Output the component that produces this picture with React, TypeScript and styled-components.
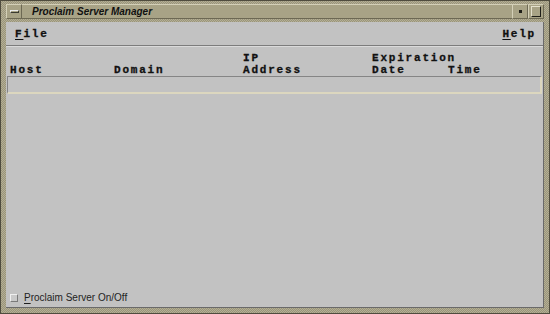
import React from "react";
import styled, { createGlobalStyle } from "styled-components";

const Global = createGlobalStyle`
  html, body { margin: 0; padding: 0; background: #c2c2c2; }
  * { box-sizing: border-box; }
`;

const Window = styled.div`
  width: 550px;
  height: 314px;
  display: flex;
  flex-direction: column;
  padding: 3px 5px 5px 5px;
  border: 1px solid #4f4c3e;
  background-color: #a9a489;
  background-image: repeating-conic-gradient(#99947a 0 25%, #b4af95 0 50%);
  background-size: 2px 2px;
`;

const TitleBar = styled.div`
  height: 15px;
  display: flex;
  align-items: stretch;
  background: #a8a386;
  margin-bottom: 3px;
`;

const TitleButton = styled.div<{ $w: number }>`
  width: ${(p) => p.$w}px;
  flex: none;
  display: flex;
  align-items: center;
  justify-content: center;
  border-top: 1px solid #d4d0b8;
  border-left: 1px solid #d4d0b8;
  border-bottom: 1px solid #6d6954;
  border-right: 1px solid #6d6954;
`;

const MenuGlyph = styled.div`
  width: 9px;
  height: 3px;
  border-top: 1px solid #ececec;
  border-left: 1px solid #ececec;
  border-bottom: 1px solid #3a3a30;
  border-right: 1px solid #3a3a30;
`;

const MinGlyph = styled.div`
  width: 3px;
  height: 3px;
  background: #1e1e18;
  border: 1px solid #1e1e18;
`;

const MaxGlyph = styled.div`
  width: 10px;
  height: 11px;
  border-top: 1px solid #e4e0cc;
  border-left: 1px solid #e4e0cc;
  border-bottom: 1px solid #1e1e18;
  border-right: 1px solid #1e1e18;
`;

const TitleText = styled.div`
  flex: 1;
  display: flex;
  align-items: center;
  padding-left: 10px;
  font-family: "Liberation Sans", Arial, sans-serif;
  font-weight: bold;
  font-style: italic;
  font-size: 10px;
  color: #111;
  border-top: 1px solid #d4d0b8;
  border-bottom: 1px solid #6d6954;
`;

const Client = styled.div`
  flex: 1;
  display: flex;
  flex-direction: column;
  background: #c2c2c2;
  border-right: 1px solid #6a6a6a;
  border-bottom: 1px solid #6a6a6a;
`;

const MenuBar = styled.div`
  height: 24px;
  display: flex;
  align-items: center;
  justify-content: space-between;
  padding: 1px 7px 0 9px;
  border-bottom: 1px solid #7c7c7c;
  box-shadow: 0 1px 0 #dadada;
`;

const MonoText = styled.span`
  font-family: "Liberation Mono", "Courier New", monospace;
  font-weight: bold;
  font-size: 11px;
  letter-spacing: 1.8px;
  color: #111;
  white-space: pre;
  -webkit-text-stroke: 0.3px #111;
`;

const Mnemonic = styled.span`
  text-decoration: underline;
  text-underline-offset: 2px;
`;

const Header = styled.div`
  display: grid;
  grid-template-columns: 104px 129px 129px 76px 1fr;
  grid-auto-rows: 12px;
  line-height: 12px;
  padding: 6px 0 0 4px;
`;

const HeaderCell = styled(MonoText)<{ $col: number; $row: number; $span?: number }>`
  grid-column: ${(p) => p.$col} / span ${(p) => p.$span ?? 1};
  grid-row: ${(p) => p.$row};
`;

const ListBox = styled.div`
  height: 18px;
  margin: 0 1px 0 1px;
  border-top: 1px solid #858585;
  border-left: 1px solid #858585;
  border-bottom: 2px solid #dcd7bf;
  border-right: 2px solid #dcd7bf;
  background: #c2c2c2;
`;

const Spacer = styled.div`
  flex: 1;
`;

const Footer = styled.div`
  display: flex;
  align-items: center;
  gap: 6px;
  padding: 0 0 3px 4px;
`;

const CheckBox = styled.div`
  width: 8px;
  height: 8px;
  background: #c9c9c9;
  border-top: 1px solid #efefef;
  border-left: 1px solid #efefef;
  border-bottom: 1px solid #7a7a7a;
  border-right: 1px solid #7a7a7a;
`;

const Label = styled.span`
  font-family: "Liberation Sans", Arial, sans-serif;
  font-size: 10px;
  color: #1e1e1e;
  line-height: 12px;
`;

export default function App() {
  return (
    <>
      <Global />
      <Window>
        <TitleBar>
          <TitleButton $w={16}>
            <MenuGlyph />
          </TitleButton>
          <TitleText>Proclaim Server Manager</TitleText>
          <TitleButton $w={16}>
            <MinGlyph />
          </TitleButton>
          <TitleButton $w={16}>
            <MaxGlyph />
          </TitleButton>
        </TitleBar>
        <Client>
          <MenuBar>
            <MonoText>
              <Mnemonic>F</Mnemonic>ile
            </MonoText>
            <MonoText>
              <Mnemonic>H</Mnemonic>elp
            </MonoText>
          </MenuBar>
          <Header>
            <HeaderCell $col={3} $row={1}>IP</HeaderCell>
            <HeaderCell $col={4} $row={1} $span={2}>Expiration</HeaderCell>
            <HeaderCell $col={1} $row={2}>Host</HeaderCell>
            <HeaderCell $col={2} $row={2}>Domain</HeaderCell>
            <HeaderCell $col={3} $row={2}>Address</HeaderCell>
            <HeaderCell $col={4} $row={2}>Date</HeaderCell>
            <HeaderCell $col={5} $row={2}>Time</HeaderCell>
          </Header>
          <ListBox />
          <Spacer />
          <Footer>
            <CheckBox />
            <Label>
              <Mnemonic>P</Mnemonic>roclaim Server On/Off
            </Label>
          </Footer>
        </Client>
      </Window>
    </>
  );
}
